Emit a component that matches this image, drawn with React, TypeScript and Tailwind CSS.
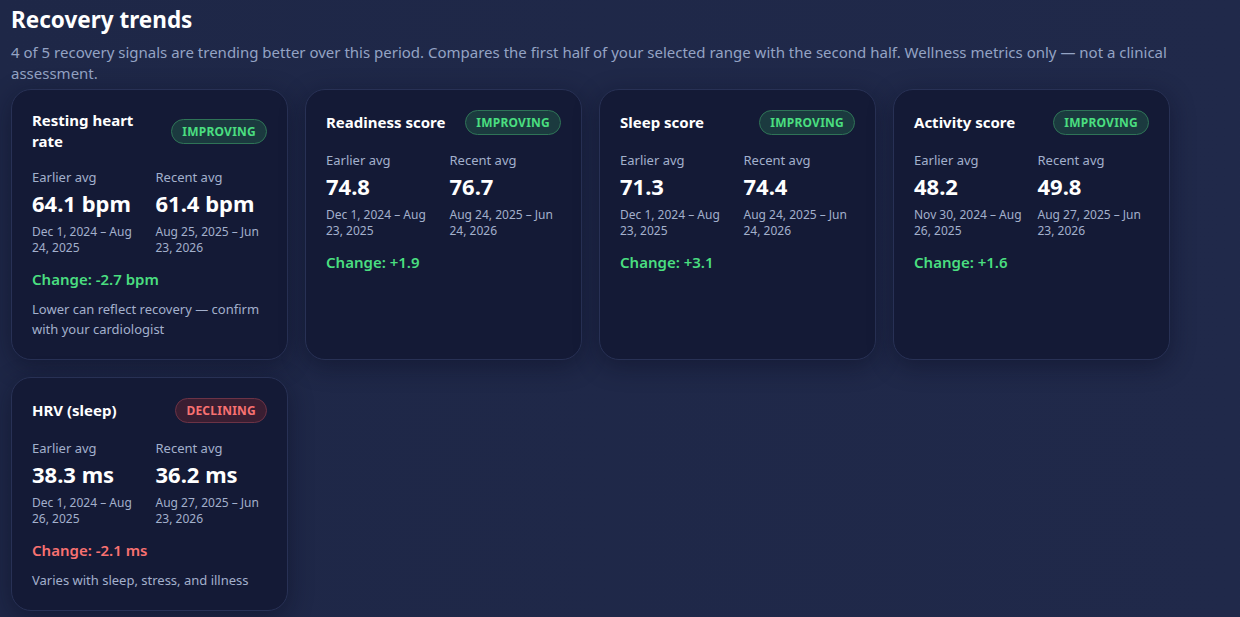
import React from 'react';

type Trend = 'improving' | 'declining';

interface Signal {
    title: string;
    trend: Trend;
    earlier: string;
    recent: string;
    earlierRange: string;
    recentRange: string;
    change: string;
    note?: string;
}

const signals: Signal[] = [
    {
        title: 'Resting heart rate',
        trend: 'improving',
        earlier: '64.1 bpm',
        recent: '61.4 bpm',
        earlierRange: 'Dec 1, 2024 – Aug 24, 2025',
        recentRange: 'Aug 25, 2025 – Jun 23, 2026',
        change: '-2.7 bpm',
        note: 'Lower can reflect recovery — confirm with your cardiologist',
    },
    {
        title: 'Readiness score',
        trend: 'improving',
        earlier: '74.8',
        recent: '76.7',
        earlierRange: 'Dec 1, 2024 – Aug 23, 2025',
        recentRange: 'Aug 24, 2025 – Jun 24, 2026',
        change: '+1.9',
    },
    {
        title: 'Sleep score',
        trend: 'improving',
        earlier: '71.3',
        recent: '74.4',
        earlierRange: 'Dec 1, 2024 – Aug 23, 2025',
        recentRange: 'Aug 24, 2025 – Jun 24, 2026',
        change: '+3.1',
    },
    {
        title: 'Activity score',
        trend: 'improving',
        earlier: '48.2',
        recent: '49.8',
        earlierRange: 'Nov 30, 2024 – Aug 26, 2025',
        recentRange: 'Aug 27, 2025 – Jun 23, 2026',
        change: '+1.6',
    },
    {
        title: 'HRV (sleep)',
        trend: 'declining',
        earlier: '38.3 ms',
        recent: '36.2 ms',
        earlierRange: 'Dec 1, 2024 – Aug 26, 2025',
        recentRange: 'Aug 27, 2025 – Jun 23, 2026',
        change: '-2.1 ms',
        note: 'Varies with sleep, stress, and illness',
    },
];

const TrendBadge: React.FC<{ trend: Trend }> = ({ trend }) => (
    <span
        className={`shrink-0 rounded-full border px-[10px] py-[3px] text-[12px] font-bold uppercase tracking-[0.02em] leading-[17px] ${trend === 'improving'
            ? 'bg-[#1b3a3f] border-[#2f7457] text-[#4ade80]'
            : 'bg-[#3a1e32] border-[#6c3346] text-[#f87171]'
            }`}
    >
        {trend === 'improving' ? 'Improving' : 'Declining'}
    </span>
);

const Stat: React.FC<{ label: string; value: string; range: string }> = ({ label, value, range }) => (
    <div>
        <div className="text-[13px] leading-[18px] text-[#a3b0cc]">{label}</div>
        <div className="mt-[3px] text-[22px] font-bold leading-[28px] text-white">{value}</div>
        <div className="mt-[7px] text-[12px] leading-[16px] text-[#a3b0cc]">{range}</div>
    </div>
);

const SignalCard: React.FC<{ signal: Signal }> = ({ signal }) => (
    <div className="rounded-[20px] border border-[#283155] bg-[#141a36] px-5 pt-5 pb-5 shadow-[0_6px_24px_rgba(8,12,30,0.45)]">
        <div className="flex items-center justify-between gap-3">
            <h3 className="text-[15px] font-bold leading-[21px] text-white">{signal.title}</h3>
            <TrendBadge trend={signal.trend} />
        </div>
        <div className="mt-4 grid grid-cols-2 gap-3">
            <Stat label="Earlier avg" value={signal.earlier} range={signal.earlierRange} />
            <Stat label="Recent avg" value={signal.recent} range={signal.recentRange} />
        </div>
        <div
            className={`mt-[12px] text-[15px] font-semibold leading-[22px] ${signal.trend === 'improving' ? 'text-[#4ade80]' : 'text-[#f87171]'}`}
        >
            {`Change: ${signal.change}`}
        </div>
        {signal.note && (
            <p className="mt-[9px] text-[13px] leading-[20px] text-[#a3b0cc]">{signal.note}</p>
        )}
    </div>
);

export default function App() {
    const improving = signals.filter(s => s.trend === 'improving').length;
    const summary = `${improving} of ${signals.length} recovery signals are trending better over this period. Compares the first half of your selected range with the second half. Wellness metrics only — not a clinical assessment.`;

    return (
        <div
            className="min-h-screen bg-gradient-to-r from-[#1e2747] to-[#20294a] px-[11px] pt-[5px] pb-6"
            style={{ fontFamily: '"Segoe UI", "Noto Sans", "Open Sans", sans-serif' }}
        >
            <h2 className="text-[22.5px] font-bold leading-[30px] text-white">Recovery trends</h2>
            <p className="mt-[7px] text-[15px] leading-[21px] text-[#94a3c4]">{summary}</p>
            <div className="mt-[5px] grid grid-cols-[repeat(4,277px)] gap-[17px]">
                {signals.map(s => (
                    <SignalCard key={s.title} signal={s} />
                ))}
            </div>
        </div>
    );
}
